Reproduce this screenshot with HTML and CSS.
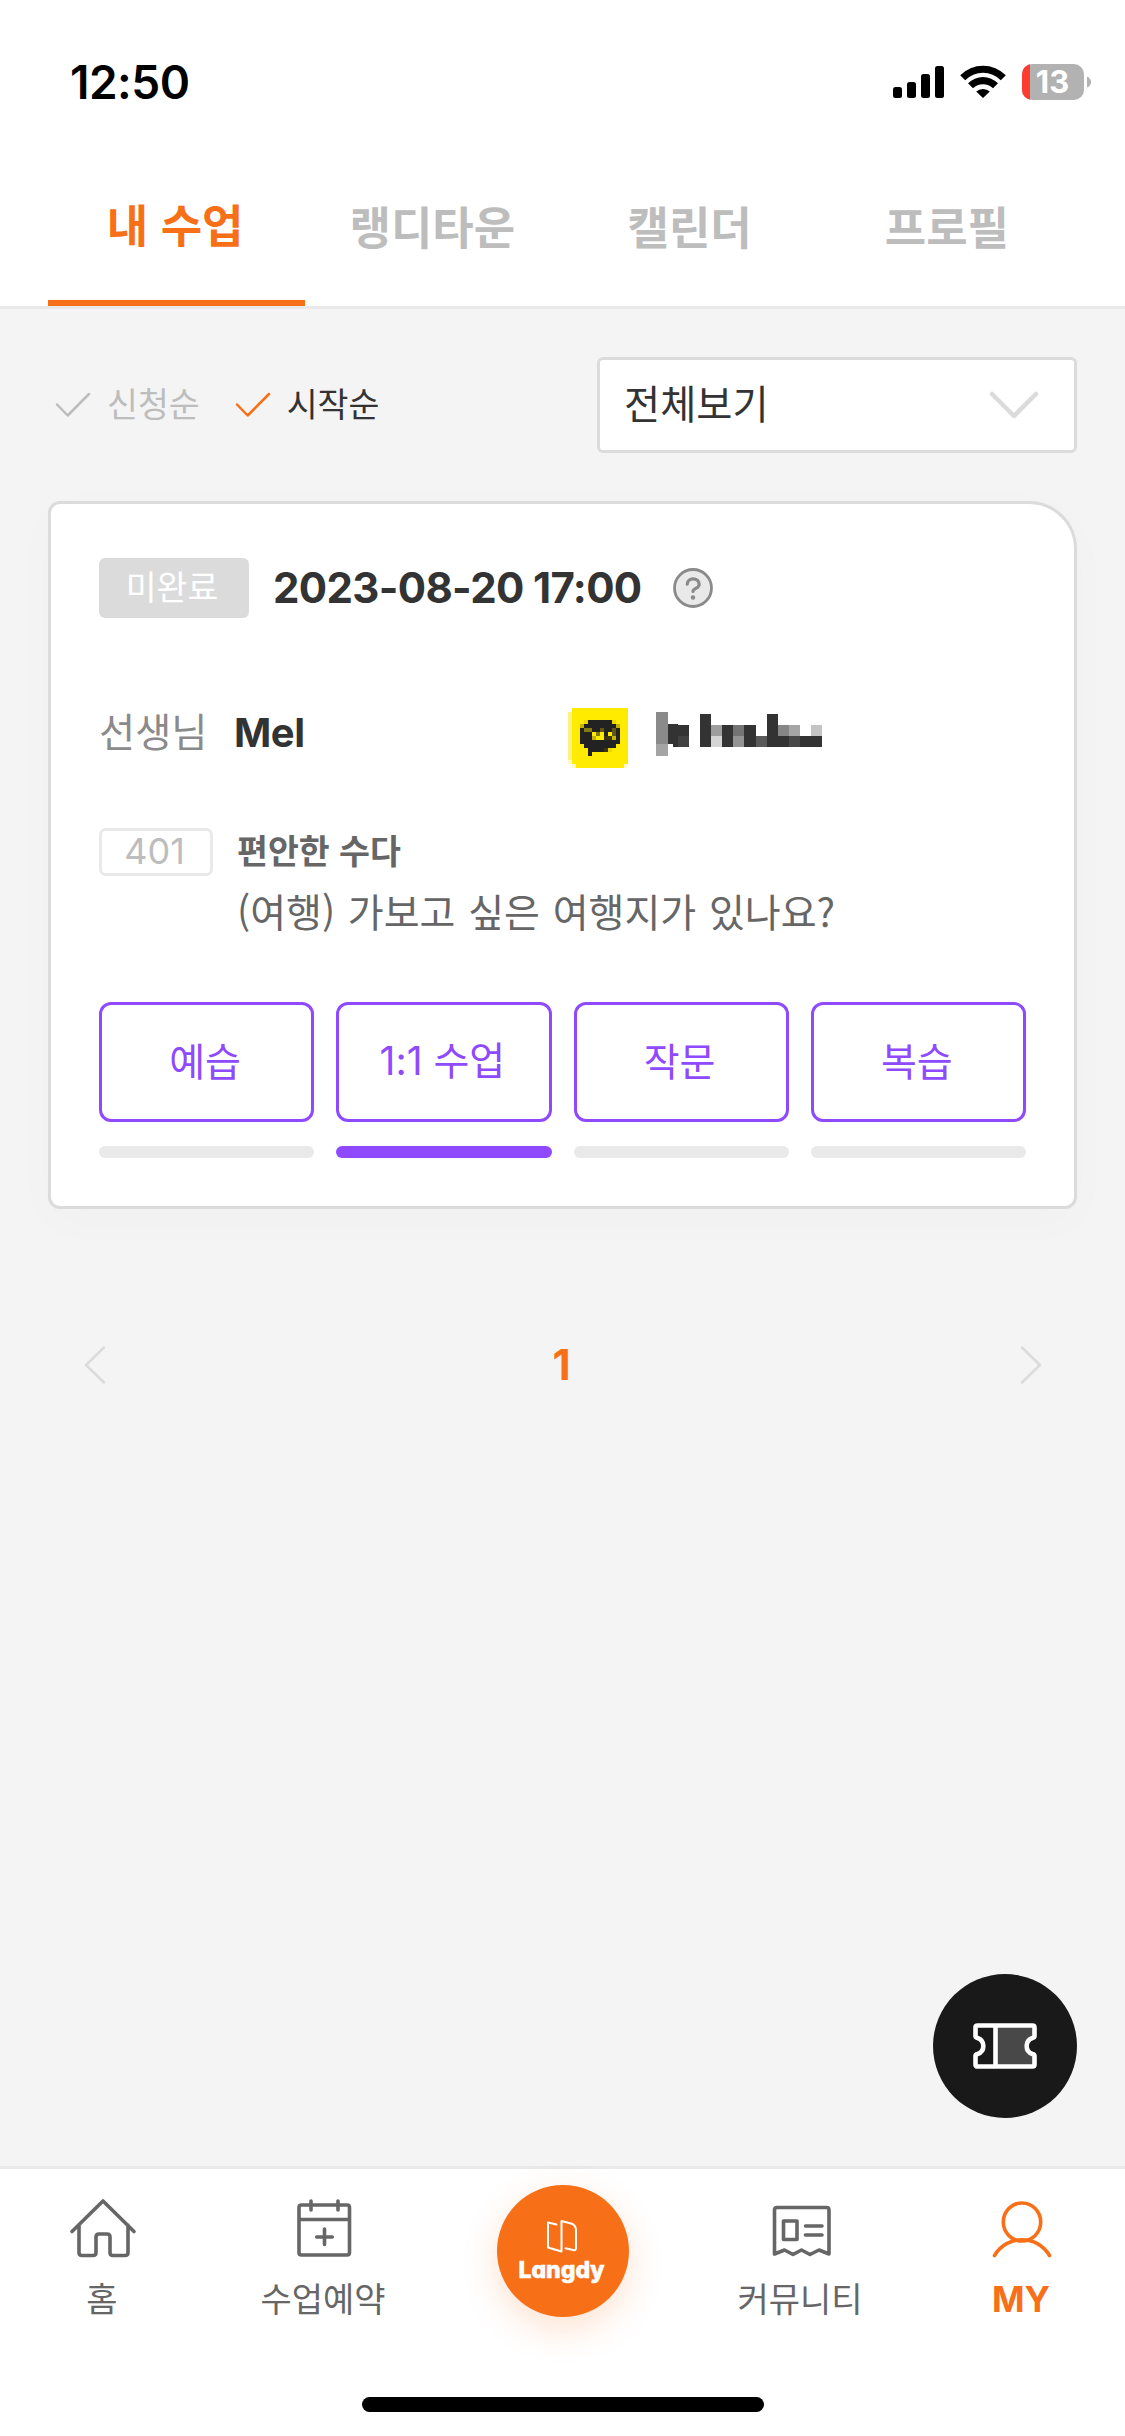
FILE: index.html
```html
<!DOCTYPE html>
<html lang="ko">
<head>
<meta charset="utf-8">
<title>내 수업</title>
<link rel="stylesheet" href="styles.css">
</head>
<body>
<div class="app">
  <header class="header">
    <div class="status">
      <span class="time">12:50</span>
      <svg class="status-icons" width="200" height="36" viewBox="0 0 200 36">
        <rect x="0" y="23" width="9" height="11" rx="2.5"/>
        <rect x="14" y="18" width="9" height="16" rx="2.5"/>
        <rect x="28" y="10" width="9" height="24" rx="2.5"/>
        <rect x="42" y="2" width="9" height="32" rx="2.5"/>
        <path d="M67.2 11.2a32 32 0 0 1 45.6 0l-5 5a25 25 0 0 0-35.6 0zM75 19.2a21.5 21.5 0 0 1 30 0l-5 5a14.5 14.5 0 0 0-20 0zM83.200 27.400a10.500 10.500 0 0 1 13.600 0l-6.800 6.700z"/>
        <clipPath id="cell"><rect x="129" y="0" width="62" height="36" rx="10"/></clipPath>
        <g clip-path="url(#cell)"><rect x="129" width="62" height="36" fill="#b2b2b2"/><rect x="129" width="8" height="36" fill="#ff3b30"/></g>
        <path d="M194 12.500q4 2 4 5.500t-4 5.500z" fill="#b2b2b2"/>
        <text class="charge" x="159.500" y="29" text-anchor="middle">13</text>
      </svg>
    </div>
    <nav class="tabs">
      <a class="tab active">내 수업</a>
      <a class="tab">랭디타운</a>
      <a class="tab">캘린더</a>
      <a class="tab">프로필</a>
    </nav>
  </header>

  <main class="main">
    <div class="filters">
      <div class="sort">
        <svg width="36" height="26" viewBox="0 0 36 26"><path d="M2 12.500 12.700 23.500 34 2"/></svg>
        <span>신청순</span>
      </div>
      <div class="sort on">
        <svg width="36" height="26" viewBox="0 0 36 26"><path d="M2 12.500 12.700 23.500 34 2"/></svg>
        <span>시작순</span>
      </div>
      <div class="select">
        <span>전체보기</span>
        <svg width="50" height="28" viewBox="0 0 50 28"><path d="M3 3 25 25 47 3"/></svg>
      </div>
    </div>

    <article class="card">
      <div class="card-head">
        <span class="badge">미완료</span>
        <span class="date">2023-08-20 17:00</span>
        <svg class="help" width="40" height="40" viewBox="0 0 40 40">
          <circle cx="20" cy="20" r="18.500"/>
          <path d="M14.200 16.200c0-7.200 12-7.200 12 0 0 4.500-6.200 3.800-6.200 7.300"/>
          <circle class="dot" cx="20" cy="29.500" r="2.200"/>
        </svg>
      </div>

      <div class="teacher">
        <span class="label">선생님</span>
        <span class="name">Mel</span>
        <svg class="kakao" width="60" height="60" viewBox="0 0 15 15" shape-rendering="crispEdges">
          <path fill="#ffeb00" d="M1 0h14v14h-1v1H2v-1H1z"/>
          <path fill="#fff27f" d="M0 1h1v12H0z"/>
          <path fill="#fff9c8" d="M0 13h1v1H0zM1 14h1v1H1zM14 14h1v1h-1z"/>
          <path fill="#222" d="M5 3h6v1h1v1h1v4h-1v1h-2v1H6v1H5v-2H4V9H3V5h1V4h1z"/>
          <path fill="#ecd800" d="M4 3h1v1H4zM11 3h1v1h-1zM10 10h1v1h-1z"/>
          <path fill="#c4b20a" d="M3 4h1v1H3zM12 4h1v1h-1zM6 7h1v1H6zM11 7h1v1h-1z"/>
          <path fill="#857a12" d="M4 5h2v1H4zM7 6h1v1H7z"/>
          <path fill="#5f5712" d="M8 5h1v1H8zM11 5h1v1h-1zM11 6h1v1h-1z"/>
          <path fill="#ffeb00" d="M6 6h1v1H6zM8 6h1v1H8zM10 6h1v1h-1zM7 7h2v1H7z"/>
          <path fill="#3a3612" d="M9 7h2v1H9zM9 10h1v1H9z"/>
        </svg>
        <svg class="masked" width="166" height="44" viewBox="0 0 166 44" shape-rendering="crispEdges">
          <path fill="#8a8a8a" d="M0 0h12v32H0z"/><path fill="#a4a4a4" d="M0 32h12v12H0z"/>
          <path fill="#333" d="M12 12h10v1h11v11H22v11h-5v-3h-5z"/><path fill="#414141" d="M22 24h11v11H22z"/>
          <path fill="#333" d="M44 2h11v33H44zM66 13h11v22H66zM88 13h12v22H88zM111 2h11v33h-11zM122 24h11v11h-11zM144 24h22v11h-22z"/>
          <path fill="#9e9e9e" d="M55 13h11v11H55z"/><path fill="#d5d5d5" d="M55 24h11v11H55z"/>
          <path fill="#747474" d="M77 13h11v11H77z"/><path fill="#949494" d="M77 24h11v11H77z"/>
          <path fill="#5a5a5a" d="M100 24h11v11h-11z"/><path fill="#868686" d="M122 13h11v11h-11z"/>
          <path fill="#a6a6a6" d="M133 13h11v11h-11z"/><path fill="#484848" d="M133 24h11v11h-11z"/>
          <path fill="#c4c4c4" d="M155 13h11v11h-11z"/>
        </svg>
      </div>

      <div class="lesson">
        <span class="code">401</span>
        <div class="topic">
          <strong>편안한 수다</strong>
          <p>(여행) 가보고 싶은 여행지가 있나요?</p>
        </div>
      </div>

      <div class="steps">
        <div class="step"><button>예습</button><i></i></div>
        <div class="step now"><button><span class="num">1:1</span> 수업</button><i></i></div>
        <div class="step"><button>작문</button><i></i></div>
        <div class="step"><button>복습</button><i></i></div>
      </div>
    </article>

    <div class="pager">
      <svg width="22" height="38" viewBox="0 0 22 38"><path d="M20 1.500 2 19 20 36.500"/></svg>
      <span>1</span>
      <svg width="22" height="38" viewBox="0 0 22 38"><path d="M2 1.500 20 19 2 36.500"/></svg>
    </div>

    <div class="fab">
      <svg width="64" height="46" viewBox="0 0 64 46">
        <path d="M24 2.500H61V14a9 9 0 0 0 0 18V43H24z" fill="#484848"/>
        <path d="M4.500 2.500h55q2 0 2 2v8.500q0 1.500-2 2a8.400 8.400 0 0 0 0 16q2 .5 2 2v8.500q0 2-2 2h-55q-2 0-2-2V33q0-1.500 2-2a8.400 8.400 0 0 0 0-16q-2-.5-2-2V4.500q0-2 2-2zM22.500 2.500v41" fill="none" stroke="#fff" stroke-width="4.600"/>
      </svg>
    </div>
  </main>

  <footer class="footer">
    <nav class="nav">
      <a class="item">
        <svg width="66" height="60" viewBox="-1 -1 66 60"><path d="M2 33.500 33 3 64 33.500M9 27v27.500q0 3 3 3H23q3 0 3-3V39q0-3 3-3h8q3 0 3 3V54.500q0 3 3 3H55q3 0 3-3V27"/></svg>
        <span>홈</span>
      </a>
      <a class="item">
        <svg width="66" height="60" viewBox="-1 -1 66 60"><path d="M10 7H56q2.500 0 2.500 2.500V54.500q0 2.500-2.500 2.500H10.500q-2.500 0-2.500-2.500V9.500Q8 7 10.500 7M8 21.500H58.500M20 3v9M47 3v9M33.500 31v15.500M25.700 39H41.300"/></svg>
        <span>수업예약</span>
      </a>
      <a class="home">
        <svg width="30" height="34" viewBox="0 0 30 34"><path d="M9.500 4.500 1 2.500V27.500L14.500 31.500V1L24 3.500Q29 5 29 10V28q0 3-3 2L18.500 28.300"/></svg>
        <span>Langdy</span>
      </a>
      <a class="item">
        <svg width="66" height="60" viewBox="-1 -1 66 60"><path d="M6.500 56V12q0-2.500 2.500-2.500H58.500q2.500 0 2.500 2.500V56L51 52 42 56.500 33.500 52 25 56.500 16.500 52zM15.500 23h13.500v18.500H15.500zM37.500 28H54M37.500 37H54"/></svg>
        <span>커뮤니티</span>
      </a>
      <a class="item my">
        <svg width="66" height="60" viewBox="-1 -2 66 60"><ellipse cx="33" cy="23" rx="18.700" ry="19"/><path d="M5.500 56.500C18 35.500 48 35.500 60.500 56.500"/></svg>
        <span>MY</span>
      </a>
    </nav>
    <div class="indicator"></div>
  </footer>
</div>
</body>
</html>
```
FILE: styles.css
```css
* { box-sizing: border-box; margin: 0; }
body { font-family: "Noto Sans CJK KR", sans-serif; color: #333; background: #f4f4f4; }
svg { display: block; flex: none; overflow: visible; }
.app { width: 1125px; height: 2436px; display: flex; flex-direction: column; overflow: hidden; }

.header { height: 309px; background: #fff; border-bottom: 3px solid #e9e9e9; }
.status { height: 160px; padding: 64px 32px 0 70px; display: flex; justify-content: space-between; align-items: flex-start; }
.time { font: 600 46px/36px Inter, sans-serif; letter-spacing: -.5px; color: #000; }
.charge { font: 700 31px Inter, sans-serif; fill: #fff; }
.tabs { height: 146px; padding: 0 48px; display: flex; }
.tab { flex: 1; padding: 36px 3px 0 0; text-align: center; font-size: 45px; line-height: 60px; font-weight: 700; color: #bdbdbd; }
.tab.active { padding-top: 34px; color: #f77018; border-bottom: 6px solid #f77018; }

.main { flex: 1; padding: 48px 48px 0; display: flex; flex-direction: column; }
.filters { height: 96px; display: flex; align-items: center; }
.sort { display: flex; align-items: center; padding-left: 7px; margin-right: 28px; font-size: 33.600px; line-height: 48px; color: #bdbdbd; }
.sort span { margin: -5px 0 0 16px; }
.sort path { fill: none; stroke: #bdbdbd; stroke-width: 2.500; stroke-linecap: round; stroke-linejoin: round; }
.sort.on { color: #333; }
.sort.on path { stroke: #f77018; }
.select { width: 480px; height: 96px; margin-left: auto; padding: 0 35px 0 24px; border: 3px solid #dbdbdb; border-radius: 6px; background: #fff; display: flex; align-items: center; justify-content: space-between; font-size: 39.300px; line-height: 56px; }
.select span { margin-top: -7px; }
.select path { fill: none; stroke: #dbdbdb; stroke-width: 4.500; stroke-linecap: round; stroke-linejoin: round; }

.card { height: 708px; margin-top: 48px; padding: 54px 48px 0; border: 3px solid #dbdbdb; border-radius: 12px 48px 12px 12px; background: #fff; box-shadow: 0 12px 48px rgba(0, 0, 0, .02); }
.card-head { height: 60px; display: flex; align-items: center; }
.badge { width: 150px; height: 60px; padding-right: 4px; border-radius: 6px; background: #dbdbdb; color: #fff; font-size: 33.600px; line-height: 55px; text-align: center; }
.date { width: 400px; margin-left: 24px; font: 700 42px/60px Inter, sans-serif; letter-spacing: -.65px; }
.help circle { fill: #e9e9e9; stroke: #8a8a8a; stroke-width: 2.800; }
.help path { fill: none; stroke: #8a8a8a; stroke-width: 3.200; stroke-linecap: round; }
.help .dot { fill: #8a8a8a; stroke: none; }
.teacher { height: 60px; margin-top: 90px; display: flex; align-items: flex-start; }
.label { width: 135px; font-size: 39.300px; line-height: 43px; color: #8a8a8a; }
.name { width: 334px; font: 700 40px/50px Inter, sans-serif; letter-spacing: -.4px; }
.masked { margin: 4px 0 0 28px; }
.lesson { height: 234px; padding-top: 60px; display: flex; align-items: flex-start; }
.code { width: 114px; height: 48px; padding-right: 3px; border: 3px solid #e9e9e9; border-radius: 7px; color: #bdbdbd; font: 400 36px/41px Inter, sans-serif; text-align: center; }
.topic { margin-left: 24px; color: #666; }
.topic strong { display: block; font-size: 33.600px; line-height: 44px; }
.topic p { font-size: 39px; line-height: 56px; margin-top: 10px; word-spacing: 1.800px; white-space: nowrap; }
.steps { display: grid; grid-template-columns: repeat(4, 1fr); gap: 22px; }
.step button { display: block; width: 100%; height: 120px; padding: 0 3px 6px 0; border: 3px solid #8f4aff; border-radius: 12px; background: #fff; color: #8f4aff; font: 400 39px/56px "Noto Sans CJK KR", sans-serif; }
.step .num { font-family: Inter, sans-serif; }
.step i { display: block; height: 12px; margin-top: 24px; border-radius: 6px; background: #e9e9e9; }
.step.now i { background: #8f4aff; }

.pager { height: 60px; margin-top: 126px; padding: 0 35px 0 36px; display: flex; align-items: center; justify-content: space-between; }
.pager path { fill: none; stroke: #dbdbdb; stroke-width: 2.500; stroke-linecap: round; stroke-linejoin: round; }
.pager span { padding-right: 3px; font: 700 42px/60px Inter, sans-serif; color: #f77018; }
.fab { width: 144px; height: 144px; margin: auto 0 48px auto; border-radius: 50%; background: #191919; display: flex; align-items: center; justify-content: center; }

.footer { height: 270px; background: #fff; border-top: 3px solid #e9e9e9; }
.nav { height: 228px; display: grid; grid-template-columns: 204px 238px 241px 234px 208px; }
.item { display: flex; flex-direction: column; align-items: center; padding-top: 28px; color: #666; font-size: 34px; line-height: 44px; }
.item path, .item ellipse { fill: none; stroke: #666; stroke-width: 3.600; stroke-linejoin: round; stroke-linecap: round; }
.item span { margin-top: 19px; }
.item.my { color: #f77018; font: 700 35px/46px Inter, sans-serif; }
.item.my path, .item.my ellipse { stroke: #f77018; }
.home { width: 132px; height: 132px; margin: 16px auto 0; border-radius: 50%; background: #f77018; box-shadow: 0 12px 36px rgba(247, 112, 24, .2); display: flex; flex-direction: column; align-items: center; color: #fff; padding: 35px 2px 0 0; }
.home path { fill: none; stroke: #fff; stroke-width: 2; stroke-linejoin: round; stroke-linecap: round; }
.home span { font: 800 23px/28px Inter, sans-serif; font-feature-settings: "cv11"; margin-top: 2px; -webkit-text-stroke: .6px #fff; }
.indicator { width: 402px; height: 15px; margin: 0 auto; border-radius: 8px; background: #000; }
```
